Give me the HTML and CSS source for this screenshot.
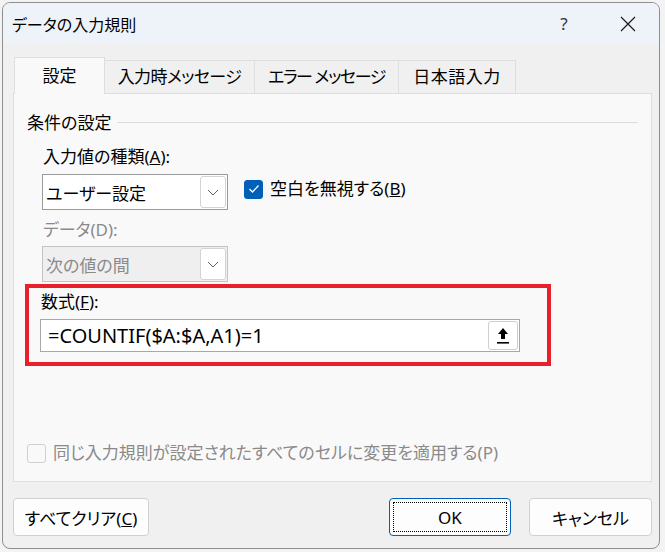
FILE: index.html
```html
<!DOCTYPE html>
<html lang="ja">
<head>
    <meta charset="UTF-8">
    <title>データの入力規則</title>
    <link rel="stylesheet" href="styles.css">
</head>
<body>
    <div class="dialog">
        <div class="titlebar">
            <span class="title">データの入力規則</span>
            <span class="help">?</span>
            <span class="close">
                <svg width="16" height="16" viewBox="0 0 16 16"><path d="M1 1L15 15M15 1L1 15" stroke="#1a1a1a" stroke-width="1.2" fill="none"/></svg>
            </span>
        </div>

        <div class="content">
            <div class="tabs">
                <div class="tab active">設定</div>
                <div class="tab tab-input">入力時メッセージ</div>
                <div class="tab tab-error">エラー メッセージ</div>
                <div class="tab tab-ime">日本語入力</div>
            </div>

            <div class="panel">
                <div class="group-head">
                    <span>条件の設定</span>
                    <span class="group-line"></span>
                </div>

                <div class="label">入力値の種類(<u>A</u>):</div>
                <div class="row">
                    <div class="select">
                        <span class="select-text">ユーザー設定</span>
                        <span class="drop"><svg width="12" height="7" viewBox="0 0 12 7"><path d="M1 1L6 6L11 1" stroke="#666" stroke-width="1" fill="none"/></svg></span>
                    </div>
                    <label class="check">
                        <span class="box checked"><svg width="12" height="10" viewBox="0 0 12 10"><path d="M1.5 5L4.5 8L10.5 1.5" stroke="#fff" stroke-width="1.3" fill="none"/></svg></span>
                        <span>空白を無視する(<u>B</u>)</span>
                    </label>
                </div>

                <div class="label disabled">データ(D):</div>
                <div class="select off">
                    <span class="select-text">次の値の間</span>
                    <span class="drop"><svg width="12" height="7" viewBox="0 0 12 7"><path d="M1 1L6 6L11 1" stroke="#666" stroke-width="1" fill="none"/></svg></span>
                </div>

                <div class="mark">
                    <div class="label">数式(<u>F</u>):</div>
                    <div class="formula">
                        <span class="formula-text">=COUNTIF($A:$A,A1)=1</span>
                        <span class="pick"><svg width="14" height="18" viewBox="0 0 14 18"><path d="M7 1L12 7H9V12H5V7H2Z" fill="#000"/><rect x="1" y="15" width="12" height="1.6" fill="#000"/></svg></span>
                    </div>
                </div>

                <label class="check apply">
                    <span class="box"></span>
                    <span>同じ入力規則が設定されたすべてのセルに変更を適用する(P)</span>
                </label>
            </div>

            <div class="actions">
                <button class="btn clear">すべてクリア(<u>C</u>)</button>
                <span class="spacer"></span>
                <button class="btn ok"><span class="focus">OK</span></button>
                <button class="btn">キャンセル</button>
            </div>
        </div>
    </div>
</body>
</html>
```

FILE: styles.css
```css
body {
    margin: 0;
    padding: 2px 5px 3px 2px;
    background: #f3f3f3;
    font-family: "Noto Sans", "Noto Sans CJK JP", sans-serif;
    font-feature-settings: "palt";
    color: #000;
}

.dialog {
    width: 656px;
    height: 545px;
    border: 1px solid #8e8e8e;
    border-radius: 8px;
    background: #f0f0f0;
    overflow: hidden;
    display: flex;
    flex-direction: column;
}

.titlebar {
    height: 41px;
    background: #eef2f9;
    display: flex;
    align-items: center;
    padding: 0 11px 0 9px;
}

.title {
    flex: 1;
    font-size: 16px;
}

.help {
    width: 40px;
    text-align: center;
    font-size: 17px;
    color: #333;
}

.close {
    width: 40px;
    margin-left: 24px;
    display: flex;
    justify-content: center;
}

.content {
    padding: 13px 7px 0 10px;
}

.tabs {
    display: flex;
    align-items: flex-end;
    height: 36px;
    padding-left: 1px;
}

.tab {
    height: 33px;
    line-height: 32px;
    text-align: center;
    font-size: 17px;
    letter-spacing: -0.6px;
    border: 1px solid #dedede;
    border-bottom: none;
    margin-left: -1px;
    background: #f0f0f0;
    box-sizing: border-box;
    white-space: nowrap;
}

.tab.active {
    width: 91px;
    height: 37px;
    margin-bottom: -1px;
    margin-left: 0;
    letter-spacing: 0;
    background: #f9f9f9;
    position: relative;
    z-index: 1;
    line-height: 36px;
}

.tab-input {
    width: 151px;
}

.tab-error {
    width: 145px;
    letter-spacing: -1.4px;
}

.tab-ime {
    width: 118px;
    letter-spacing: 0.5px;
}

.panel {
    height: 389px;
    box-sizing: border-box;
    border: 1px solid #dedede;
    background: #f9f9f9;
    padding: 17px 13px 0 13px;
}

.group-head {
    display: flex;
    align-items: center;
    font-size: 17px;
    line-height: 24px;
}

.group-line {
    flex: 1;
    height: 1px;
    background: #dcdcdc;
    margin-left: 6px;
    margin-top: -1px;
}

.label {
    font-size: 17px;
    line-height: 24px;
    margin: 10px 0 5px 16px;
}

.label.disabled {
    color: #8a8a8a;
    margin: 8px 0 4px 16px;
}

.row {
    display: flex;
    align-items: flex-start;
}

.select {
    width: 186px;
    height: 36px;
    box-sizing: border-box;
    margin-left: 15px;
    border: 1px solid #9a9a9a;
    background: #fff;
    display: flex;
    align-items: center;
    padding: 1px;
}

.select-text {
    flex: 1;
    font-size: 17px;
    padding-left: 2px;
}

.drop {
    width: 26px;
    height: 32px;
    box-sizing: border-box;
    border: 1px solid #d4d4d4;
    border-radius: 3px;
    background: #fff;
    display: flex;
    align-items: center;
    justify-content: center;
}

.select.off {
    background: #efefef;
    border-color: #c4c4c4;
    color: #8a8a8a;
}

.check {
    display: flex;
    align-items: center;
    gap: 7px;
    font-size: 17px;
    line-height: 24px;
}

.row .check {
    margin: 3px 0 0 16px;
}

.box {
    width: 19px;
    height: 19px;
    box-sizing: border-box;
    border: 1px solid #c8c8c8;
    border-radius: 3px;
    background: #fafafa;
    display: flex;
    align-items: center;
    justify-content: center;
}

.box.checked {
    background: #005fb8;
    border-color: #005fb8;
}

.mark {
    width: 526px;
    box-sizing: border-box;
    margin: 2px 0 0 -2px;
    border: 4px solid #e8202a;
    padding: 2px 27px 10px 11px;
}

.mark .label {
    margin: 0 0 5px 1px;
}

.formula {
    height: 33px;
    box-sizing: border-box;
    border: 1px solid #a8a8a8;
    background: #fff;
    display: flex;
    align-items: center;
    padding-right: 1px;
}

.formula-text {
    flex: 1;
    font-size: 20px;
    padding-left: 7px;
}

.pick {
    width: 30px;
    height: 29px;
    box-sizing: border-box;
    border: 1px solid #cfcfcf;
    border-radius: 3px;
    display: flex;
    align-items: center;
    justify-content: center;
}

.apply {
    margin: 75px 0 0 0;
    color: #8a8a8a;
}

.apply .box {
    border-color: #d0d0d0;
    background: #f9f9f9;
}

.actions {
    display: flex;
    margin-top: 16px;
    gap: 18px;
}

.spacer {
    flex: 1;
}

.btn {
    height: 38px;
    width: 123px;
    font-family: inherit;
    font-feature-settings: "palt";
    font-size: 17px;
    background: #fdfdfd;
    border: 1px solid #d0d0d0;
    border-radius: 4px;
    color: #000;
    padding: 0;
}

.btn.clear {
    width: 136px;
}

.btn.ok {
    width: 122px;
    border-color: #005fb8;
    padding: 3px;
    display: flex;
}

.focus {
    flex: 1;
    border: 1px dotted #000;
    display: flex;
    align-items: center;
    justify-content: center;
}
```
